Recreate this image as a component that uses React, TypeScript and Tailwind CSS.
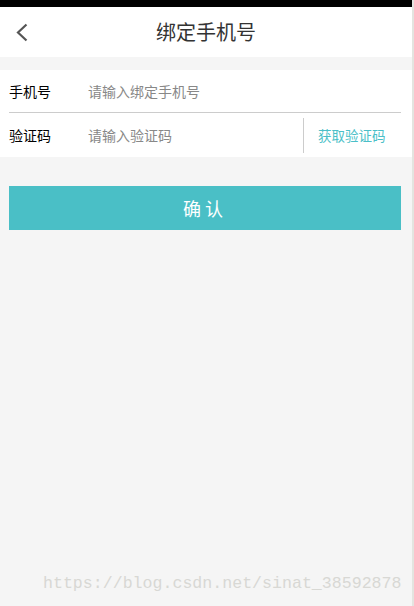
import React, { useState } from 'react';

const App: React.FC = () => {
  const [phone, setPhone] = useState('');
  const [code, setCode] = useState('');

  return (
    <div
      className="flex h-[606px] w-[414px] overflow-hidden bg-[#e4e4e0]"
      style={{ fontFamily: '"Noto Sans CJK SC", "Noto Sans", sans-serif' }}
    >
      <div className="relative flex w-[412px] flex-col bg-[#f5f5f5]">
        {/* barra de estado */}
        <div className="h-[7px] bg-black" />

        {/* cabeçalho */}
        <header className="relative flex h-[50px] items-center justify-center bg-white">
          <button className="absolute left-[13px] top-[15px] flex h-[20px] w-[18px] items-center justify-center">
            <svg width="14" height="19" viewBox="0 0 14 19" fill="none">
              <path d="M11.5 1.5 L3 9.5 L11.5 17.5" stroke="#555" strokeWidth="2.2" />
            </svg>
          </button>
          <h1 className="text-[20px] font-normal leading-none text-[#333]">绑定手机号</h1>
        </header>

        {/* formulário */}
        <div className="mt-[13px] bg-white pl-[9px] pr-[11px]">
          <div className="flex h-[43px] items-center border-b border-[#cccccc]">
            <span className="w-[79px] text-[14px] text-black">手机号</span>
            <input
              value={phone}
              onChange={(e) => setPhone(e.target.value)}
              placeholder="请输入绑定手机号"
              className="flex-1 bg-transparent text-[14px] text-[#333] outline-none placeholder:text-[#888]"
            />
          </div>
          <div className="flex h-[44px] items-center">
            <span className="w-[79px] text-[14px] text-black">验证码</span>
            <input
              value={code}
              onChange={(e) => setCode(e.target.value)}
              placeholder="请输入验证码"
              className="w-[200px] bg-transparent text-[14px] text-[#333] outline-none placeholder:text-[#888]"
            />
            <div className="ml-[15px] h-[35px] w-px bg-[#cccccc]" />
            <button className="ml-[14px] text-[13.5px] text-[#4bbfc8]">获取验证码</button>
          </div>
        </div>

        {/* botão confirmar */}
        <div className="mt-[29px] pl-[9px] pr-[11px]">
          <button className="flex h-[44px] w-full items-center justify-center bg-[#4abfc6] text-[18px] tracking-[4px] text-white">
            确认
          </button>
        </div>

        {/* marca d'água */}
        <span
          className="absolute left-[43px] top-[573px] text-[16.6px] leading-[22px] text-[#d8d8d4]"
          style={{ fontFamily: '"Liberation Mono", monospace' }}
        >
          https://blog.csdn.net/sinat_38592878
        </span>
      </div>
    </div>
  );
};

export default App;
